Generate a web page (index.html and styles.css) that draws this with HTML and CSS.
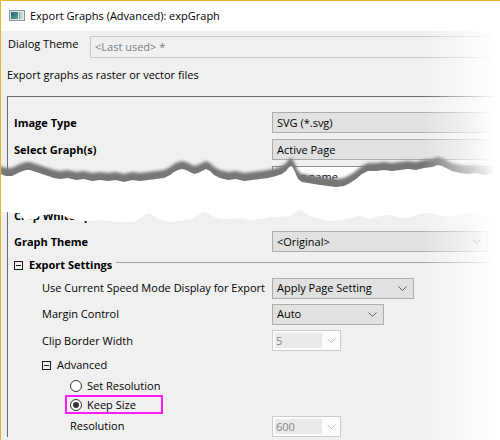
FILE: index.html
```html
<!DOCTYPE html>
<html>
<head>
<meta charset="utf-8">
<link rel="stylesheet" href="styles.css">
</head>
<body>
<div class="window">
  <div class="titlebar">
    <svg class="app-icon" width="16" height="11" viewBox="0 0 16 11">
      <defs>
        <linearGradient id="ig" x1="0" y1="0" x2="1" y2="1">
          <stop offset="0" stop-color="#2f5d86"/>
          <stop offset="0.6" stop-color="#3f8a8a"/>
          <stop offset="1" stop-color="#5fae6a"/>
        </linearGradient>
      </defs>
      <rect x="0.5" y="0.5" width="15" height="10" fill="#e4eaea" stroke="#8c9696"/>
      <rect x="2" y="2" width="7" height="7" fill="url(#ig)"/>
      <rect x="10" y="2" width="4" height="7" fill="#c9d9d9"/>
      <rect x="10" y="2" width="1" height="7" fill="#6fa08a"/>
    </svg>
    <span class="title">Export Graphs (Advanced): expGraph</span>
  </div>
  <div class="content">
    <div class="theme-row">
      <span class="theme-label">Dialog Theme</span>
      <div class="theme-input">&lt;Last used&gt; *</div>
    </div>
    <p class="desc">Export graphs as raster or vector files</p>
    <div class="panel">
      <div class="row">
        <span class="lbl l1 bold">Image Type</span>
        <div class="combo"><span>SVG (*.svg)</span></div>
      </div>
      <div class="row">
        <span class="lbl l1 bold">Select Graph(s)</span>
        <div class="combo"><span>Active Page</span></div>
      </div>
      <div class="row">
        <span class="lbl l1 bold">File Name</span>
        <div class="combo white"><span>Using name</span></div>
      </div>
      <div class="row row-crop">
        <span class="lbl l1 bold">Crop White Space</span>
        <span></span>
      </div>
      <div class="row">
        <span class="lbl l1 bold">Graph Theme</span>
        <div class="combo w-theme"><span>&lt;Original&gt;</span><svg class="chev" width="9" height="5" viewBox="0 0 9 5"><path d="M0.5 0.5 L4.5 4.5 L8.5 0.5" fill="none" stroke="#606060"/></svg></div>
      </div>
      <div class="group-head">
        <span class="minus"></span>
        <span class="bold">Export Settings</span>
        <span class="group-line"></span>
      </div>
      <div class="row row-26">
        <span class="lbl l2">Use Current Speed Mode Display for Export</span>
        <div class="combo w-apply"><span>Apply Page Setting</span><svg class="chev" width="9" height="5" viewBox="0 0 9 5"><path d="M0.5 0.5 L4.5 4.5 L8.5 0.5" fill="none" stroke="#606060"/></svg></div>
      </div>
      <div class="row row-26">
        <span class="lbl l2">Margin Control</span>
        <div class="combo w-auto"><span>Auto</span><svg class="chev" width="9" height="5" viewBox="0 0 9 5"><path d="M0.5 0.5 L4.5 4.5 L8.5 0.5" fill="none" stroke="#606060"/></svg></div>
      </div>
      <div class="row">
        <span class="lbl l2">Clip Border Width</span>
        <div class="combo disabled w-small"><span class="field">5</span><svg class="chev" width="9" height="5" viewBox="0 0 9 5"><path d="M0.5 0.5 L4.5 4.5 L8.5 0.5" fill="none" stroke="#c2c2c2"/></svg></div>
      </div>
      <div class="sub-head">
        <span class="minus"></span>
        <span>Advanced</span>
      </div>
      <div class="radio-row">
        <span class="radio"></span>
        <span>Set Resolution</span>
      </div>
      <div class="radio-row keep">
        <div class="highlight">
          <span class="radio checked"></span>
          <span>Keep Size</span>
        </div>
      </div>
      <div class="row res-row">
        <span class="lbl l3">Resolution</span>
        <div class="combo disabled w-small"><span class="field">600</span><svg class="chev" width="9" height="5" viewBox="0 0 9 5"><path d="M0.5 0.5 L4.5 4.5 L8.5 0.5" fill="none" stroke="#c2c2c2"/></svg></div>
      </div>
    </div>
  </div>
  <svg class="tear" width="500" height="440" viewBox="0 0 500 440">
    <defs>
      <filter id="blur" x="-5%" y="-50%" width="110%" height="200%">
        <feGaussianBlur stdDeviation="1.4"/>
      </filter>
    </defs>
    <g filter="url(#blur)" transform="translate(0,-8)">
      <polygon fill="#767676" points="0,174 6,176 12,176 16,174 20,172 26,170 30,170 36,172 42,174 48,176 54,178 60,179 68,178 76,180 84,179 92,181 100,180 108,181 116,180 124,182 132,180 140,181 148,180 156,179 164,178 170,175 174,172 178,170 182,169 186,170 190,172 194,174 198,173 202,171 206,169 210,171 214,175 220,178 228,180 236,179 244,181 252,180 260,179 268,178 276,176 282,174 286,171 289,167 292,166 295,172 298,179 302,182 308,183 314,184 320,185 328,186 336,187 344,186 350,183 356,179 362,174 368,171 376,171 384,170 392,171 400,170 408,169 416,170 424,168 432,167 438,165 442,166 446,168 452,171 460,173 468,174 476,173 484,175 492,174 500,175 500,200 0,200"/>
    </g>
    <polygon fill="#ffffff" points="0,174 6,176 12,176 16,174 20,172 26,170 30,170 36,172 42,174 48,176 54,178 60,179 68,178 76,180 84,179 92,181 100,180 108,181 116,180 124,182 132,180 140,181 148,180 156,179 164,178 170,175 174,172 178,170 182,169 186,170 190,172 194,174 198,173 202,171 206,169 210,171 214,175 220,178 228,180 236,179 244,181 252,180 260,179 268,178 276,176 282,174 286,171 289,167 292,166 295,172 298,179 302,182 308,183 314,184 320,185 328,186 336,187 344,186 350,183 356,179 362,174 368,171 376,171 384,170 392,171 400,170 408,169 416,170 424,168 432,167 438,165 442,166 446,168 452,171 460,173 468,174 476,173 484,175 492,174 500,175 500,214 490,216 480,215 470,213 460,214 450,217 440,216 430,213 420,214 410,217 400,218 390,215 380,216 370,219 360,216 350,218 340,220 330,221 320,219 312,217 306,214 302,210 298,211 294,213 290,216 280,217 270,217 260,219 250,220 240,218 230,219 222,219 214,217 208,213 204,212 200,214 192,219 185,220 178,221 170,222 162,220 156,218 150,213 146,214 142,217 136,221 128,222 118,222 110,221 100,220 90,221 80,221 72,219 66,217 62,215 58,215 52,214 46,215 40,215 36,219 28,220 22,218 20,213 12,213 6,212 0,212"/>
  </svg>
  <div class="fade"></div>
</div>
</body>
</html>
```
FILE: styles.css
```css
* {
  box-sizing: border-box;
}

body {
  margin: 0;
  font-family: "Open Sans", "Noto Sans", sans-serif;
  font-size: 11px;
  color: #000;
}

.window {
  position: relative;
  width: 500px;
  height: 440px;
  overflow: hidden;
  background: #f0f0f0;
  border-top: 1px solid #e6b52a;
  border-left: 1px solid #e6b52a;
}

.titlebar {
  height: 30px;
  background: #fff;
  display: flex;
  align-items: center;
  gap: 5px;
  padding-left: 8px;
  padding-bottom: 1px;
}

.app-icon {
  display: block;
}

.title {
  font-size: 11px;
  line-height: 16px;
}

.content {
  padding: 5px 0 0 6px;
}

.theme-row {
  display: flex;
  align-items: flex-start;
  height: 22px;
}

.theme-label {
  width: 83px;
  padding-left: 1px;
  line-height: 16px;
}

.theme-input {
  flex: 1;
  margin-right: -30px;
  height: 22px;
  border: 1px solid #c9c9c9;
  background: #f0f0f0;
  color: #7d7d7d;
  padding-left: 4px;
  line-height: 20px;
}

.desc {
  margin: 9px 0 0 0;
  line-height: 16px;
}

.panel {
  margin-top: 13px;
  margin-right: -40px;
  border-top: 1px solid #6b6b6b;
  border-left: 1px solid #6b6b6b;
  padding-top: 12px;
}

.bold {
  font-weight: 700;
}

.row {
  display: grid;
  grid-template-columns: 264px 1fr;
  align-items: center;
  height: 27px;
}

.row-26 {
  height: 26px;
}

.row-crop {
  margin-top: 13px;
  height: 25px;
}

.lbl {
  line-height: 16px;
  white-space: nowrap;
}

.l1 {
  padding-left: 6px;
}

.l2 {
  padding-left: 34px;
}

.l3 {
  padding-left: 62px;
}

.combo {
  height: 21px;
  border: 1px solid #adadad;
  background: #e1e1e1;
  display: flex;
  align-items: center;
  justify-content: space-between;
  padding-left: 4px;
  padding-right: 6px;
  line-height: 16px;
}

.combo.white {
  background: #fff;
  border-color: #8a8a8a;
}

.combo.disabled {
  border-color: #cccccc;
  background: #fcfcfc;
  padding-left: 2px;
  padding-right: 4px;
}

.field {
  width: 47px;
  height: 15px;
  background: #eaeaea;
  color: #868686;
  padding-left: 1px;
  line-height: 15px;
}

.chev {
  display: block;
}

.w-theme {
  width: 216px;
}

.w-apply {
  width: 142px;
}

.w-auto {
  width: 112px;
}

.w-small {
  width: 69px;
}

.group-head {
  display: flex;
  align-items: center;
  height: 20px;
  padding-left: 6px;
  gap: 6px;
  line-height: 16px;
}

.group-line {
  flex: 1;
  height: 1px;
  background: #a3a3a3;
  margin-left: -2px;
  margin-bottom: 5px;
}

.minus {
  width: 9px;
  height: 9px;
  border: 1px solid #1a1a1a;
  display: flex;
  align-items: center;
  justify-content: center;
  flex: none;
}

.minus::after {
  content: "";
  width: 5px;
  height: 1px;
  background: #1a1a1a;
}

.sub-head {
  display: flex;
  align-items: center;
  height: 22px;
  padding-left: 34px;
  gap: 6px;
  line-height: 16px;
}

.radio-row {
  display: flex;
  align-items: center;
  height: 19px;
  padding-left: 62px;
  gap: 5px;
  line-height: 16px;
}

.radio-row.keep {
  padding-left: 57px;
}

.highlight {
  display: flex;
  align-items: center;
  gap: 5px;
  width: 98px;
  height: 19px;
  border: 2px solid #ff1aff;
  padding-left: 3px;
}

.radio {
  width: 12px;
  height: 12px;
  border: 1px solid #333;
  border-radius: 50%;
  background: #fff;
  display: flex;
  align-items: center;
  justify-content: center;
  flex: none;
}

.radio.checked::after {
  content: "";
  width: 6px;
  height: 6px;
  border-radius: 50%;
  background: #333;
}

.res-row {
  margin-top: 1px;
  height: 22px;
}

.tear {
  position: absolute;
  top: -1px;
  left: -1px;
  pointer-events: none;
}

.fade {
  position: absolute;
  top: -1px;
  right: 0;
  width: 78px;
  height: 441px;
  background: linear-gradient(to right, rgba(255, 255, 255, 0) 0%, rgba(255, 255, 255, 0.6) 60%, #fff 95%);
  pointer-events: none;
}
```
